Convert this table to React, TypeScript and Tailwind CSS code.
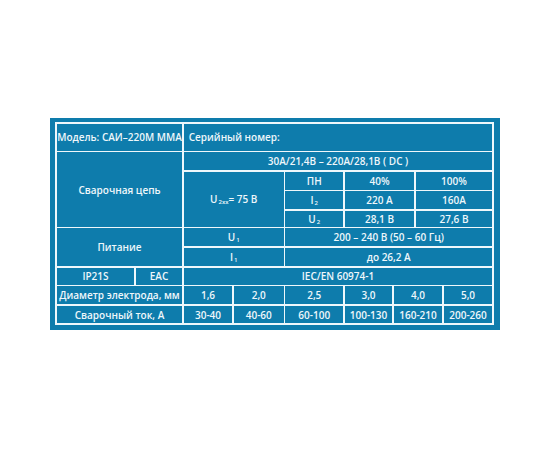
import React from "react";

function Cell({ className = "", children }: { className?: string; children?: React.ReactNode }) {
  return (
    <div className={`bg-[#0e7cac] flex items-center justify-center whitespace-nowrap ${className}`}>
      {children}
    </div>
  );
}

function Sub({ children }: { children: React.ReactNode }) {
  return <span className="text-[6px] relative top-[3px] ml-[1px]">{children}</span>;
}

export default function App() {
  return (
    <div className="w-[550px] h-[450px] bg-white pt-[118px] pl-[50px]">
      <div className="w-[450px] h-[212px] bg-[#0e7cac] pl-[5.25px] pt-[4.25px]">
        <div
          className="grid w-[438.5px] bg-[#eef7fb] p-[1.5px] gap-[1.5px] text-[10px] leading-none font-semibold text-[#eef7fb] grid-cols-[77.5px_46.5px_48.5px_50px_58px_47.5px_20.5px_26.5px_48.5px] grid-rows-[27px_18px_18px_18px_16px_18px_18.5px_17px_18px_17.5px]"
          style={{ fontFamily: '"Open Sans", "Noto Sans", sans-serif' }}
        >
          {/* header */}
          <Cell className="col-span-2">Модель: САИ–220М ММА</Cell>
          <Cell className="col-span-7 justify-start pl-[5px]">Серийный номер:</Cell>

          {/* сварочная цепь */}
          <Cell className="col-span-2 row-span-4">Сварочная цепь</Cell>
          <Cell className="col-span-7">30А/21,4В – 220А/28,1В ( DC )</Cell>
          <Cell className="col-span-2 row-span-3">
            U<Sub>2хх</Sub>= 75 В
          </Cell>
          <Cell>ПН</Cell>
          <Cell className="col-span-2">40%</Cell>
          <Cell className="col-span-2">100%</Cell>
          <Cell>
            I<Sub>2</Sub>
          </Cell>
          <Cell className="col-span-2">220 А</Cell>
          <Cell className="col-span-2">160А</Cell>
          <Cell>
            U<Sub>2</Sub>
          </Cell>
          <Cell className="col-span-2">28,1 В</Cell>
          <Cell className="col-span-2">27,6 В</Cell>

          {/* питание */}
          <Cell className="col-span-2 row-span-2">Питание</Cell>
          <Cell className="col-span-2">
            U<Sub>1</Sub>
          </Cell>
          <Cell className="col-span-5">200 – 240 В (50 – 60 Гц)</Cell>
          <Cell className="col-span-2">
            I<Sub>1</Sub>
          </Cell>
          <Cell className="col-span-5">до 26,2 А</Cell>

          {/* стандарты */}
          <Cell>IP21S</Cell>
          <Cell>EAC</Cell>
          <Cell className="col-span-7">IEC/EN 60974-1</Cell>

          {/* электроды */}
          <Cell className="col-span-2">Диаметр электрода, мм</Cell>
          <Cell>1,6</Cell>
          <Cell>2,0</Cell>
          <Cell>2,5</Cell>
          <Cell>3,0</Cell>
          <Cell className="col-span-2">4,0</Cell>
          <Cell>5,0</Cell>

          <Cell className="col-span-2">Сварочный ток, А</Cell>
          <Cell>30-40</Cell>
          <Cell>40-60</Cell>
          <Cell>60-100</Cell>
          <Cell>100-130</Cell>
          <Cell className="col-span-2">160-210</Cell>
          <Cell>200-260</Cell>
        </div>
      </div>
    </div>
  );
}
